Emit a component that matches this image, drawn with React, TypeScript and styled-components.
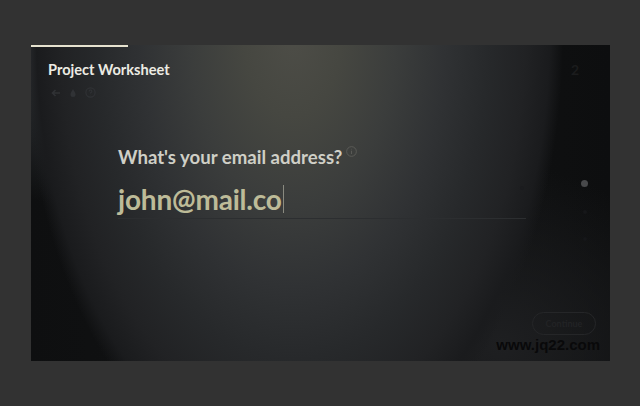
import React from "react";
import styled, { createGlobalStyle } from "styled-components";

const Global = createGlobalStyle`
  html, body { margin: 0; padding: 0; background: #323232; }
  body { font-family: Lato, "Open Sans", sans-serif; }
`;

const Page = styled.div`
  width: 640px;
  height: 406px;
  padding: 45px 30px 45px 31px;
  box-sizing: border-box;
`;

const Panel = styled.div`
  position: relative;
  width: 579px;
  height: 316px;
  overflow: hidden;
  background:
    radial-gradient(ellipse 270px 450px at 262px -10px,
      #4d4d47 0%, #464741 18%, #3b3d3c 38%, #303234 56%, #27292b 72%, #212224 86%, #1a1b1d 95%, rgba(15,16,17,0) 100%),
    radial-gradient(ellipse 150px 160px at 40px 0px, rgba(62,66,70,0.9) 0%, rgba(62,66,70,0) 100%),
    radial-gradient(ellipse 200px 180px at 470px 300px, rgba(30,31,33,1) 0%, rgba(30,31,33,0) 100%),
    linear-gradient(90deg, #0e0f10 0%, #131415 50%, #0d0e0f 100%);
  display: grid;
  grid-template-columns: 1fr 84px;
`;

const Progress = styled.div`
  position: absolute;
  left: 0;
  top: 0;
  height: 2px;
  background: #e6e2cf;
`;

const Main = styled.div`
  display: flex;
  flex-direction: column;
  padding: 16px 0 0 17px;
`;

const Title = styled.div`
  font-weight: 700;
  font-size: 14.6px;
  line-height: 18px;
  color: #ecebe3;
`;

const Tools = styled.div`
  display: flex;
  gap: 8px;
  align-items: center;
  margin: 8px 0 0 3px;
  color: #303235;
`;

const Question = styled.div`
  margin: 48px 0 0 70px;
  display: flex;
  flex-direction: column;
  width: 408px;
`;

const Label = styled.div`
  font-weight: 700;
  font-size: 18.6px;
  line-height: 22px;
  color: #cfcfc6;
  display: flex;
  align-items: flex-start;
  gap: 4px;
`;

const InfoIcon = styled.span`
  color: #5e5f5a;
  display: inline-flex;
`;

const InputRow = styled.div`
  margin-top: 14px;
  padding-bottom: 2px;
  border-bottom: 1px solid #2c2e30;
  display: flex;
  align-items: center;
`;

const Value = styled.span`
  font-weight: 700;
  font-size: 28px;
  color: #bdbb98;
  letter-spacing: -0.2px;
  line-height: 34px;
`;

const Caret = styled.span`
  width: 1px;
  height: 28px;
  background: #8a8a80;
  margin-left: 1px;
`;

const Side = styled.div`
  display: flex;
  flex-direction: column;
  align-items: flex-start;
  padding-top: 16px;
`;

const StepNum = styled.div`
  font-weight: 700;
  font-size: 14px;
  line-height: 17px;
  color: #1b1c1d;
  margin-left: 45px;
`;

const Dots = styled.div`
  display: flex;
  flex-direction: column;
  align-items: center;
  gap: 23px;
  margin: 102px 0 0 55px;
  width: 7px;
`;

const Dot = styled.span<{ $size: number; $c: string }>`
  width: ${(p) => p.$size}px;
  height: ${(p) => p.$size}px;
  border-radius: 50%;
  background: ${(p) => p.$c};
`;

const Footer = styled.div`
  position: absolute;
  right: 10px;
  bottom: 8px;
  display: flex;
  flex-direction: column;
  align-items: flex-end;
  gap: 2px;
`;

const ContinueBtn = styled.button`
  width: 64px;
  height: 23px;
  border-radius: 12px;
  border: 1px solid #252628;
  background: transparent;
  color: #222325;
  font-family: Lato, sans-serif;
  font-weight: 700;
  font-size: 9px;
  margin-right: 4px;
  padding: 0;
`;

const Watermark = styled.div`
  font-family: "Liberation Sans", Arial, sans-serif;
  font-weight: 700;
  font-size: 15px;
  line-height: 16px;
  color: #09090a;
`;

const SmallDot = styled.span`
  position: absolute;
  left: 489px;
  top: 141px;
  width: 4px;
  height: 4px;
  border-radius: 50%;
  background: #1b1c1e;
`;

export default function App() {
  return (
    <>
      <Global />
      <Page>
        <Panel>
          <Progress style={{ width: "97px" }} />
          <Main>
            <Title>Project Worksheet</Title>
            <Tools>
              <svg width="10" height="10" viewBox="0 0 10 10" fill="none" stroke="currentColor" strokeWidth="1.6">
                <path d="M9 5H1.5M4.5 2L1.5 5l3 3" />
              </svg>
              <svg width="8" height="10" viewBox="0 0 8 10" fill="currentColor">
                <path d="M4 1C3 3 1.5 4.5 1.5 6.5a2.5 2.5 0 0 0 5 0C6.5 4.5 5 3 4 1z" />
              </svg>
              <svg width="11" height="11" viewBox="0 0 10 10" fill="none" stroke="currentColor" strokeWidth="1">
                <circle cx="5" cy="5" r="4.2" />
                <path d="M3.8 4a1.2 1.2 0 1 1 1.6 1.1c-.3.1-.4.4-.4.8M5 7.2v.4" />
              </svg>
            </Tools>
            <Question>
              <Label>
                What's your email address?
                <InfoIcon>
                  <svg width="11" height="11" viewBox="0 0 10 10" fill="none" stroke="currentColor" strokeWidth="0.8">
                    <circle cx="5" cy="5" r="4.4" />
                    <path d="M5 4.3v3M5 2.6v.5" />
                  </svg>
                </InfoIcon>
              </Label>
              <InputRow>
                <Value>john@mail.co</Value>
                <Caret />
              </InputRow>
            </Question>
          </Main>
          <Side>
            <StepNum>2</StepNum>
            <Dots>
              <Dot $size={7} $c="#48494b" />
              <Dot $size={4} $c="#161719" />
              <Dot $size={4} $c="#161719" />
            </Dots>
          </Side>
          <SmallDot />
          <Footer>
            <ContinueBtn>Continue</ContinueBtn>
            <Watermark>www.jq22.com</Watermark>
          </Footer>
        </Panel>
      </Page>
    </>
  );
}
